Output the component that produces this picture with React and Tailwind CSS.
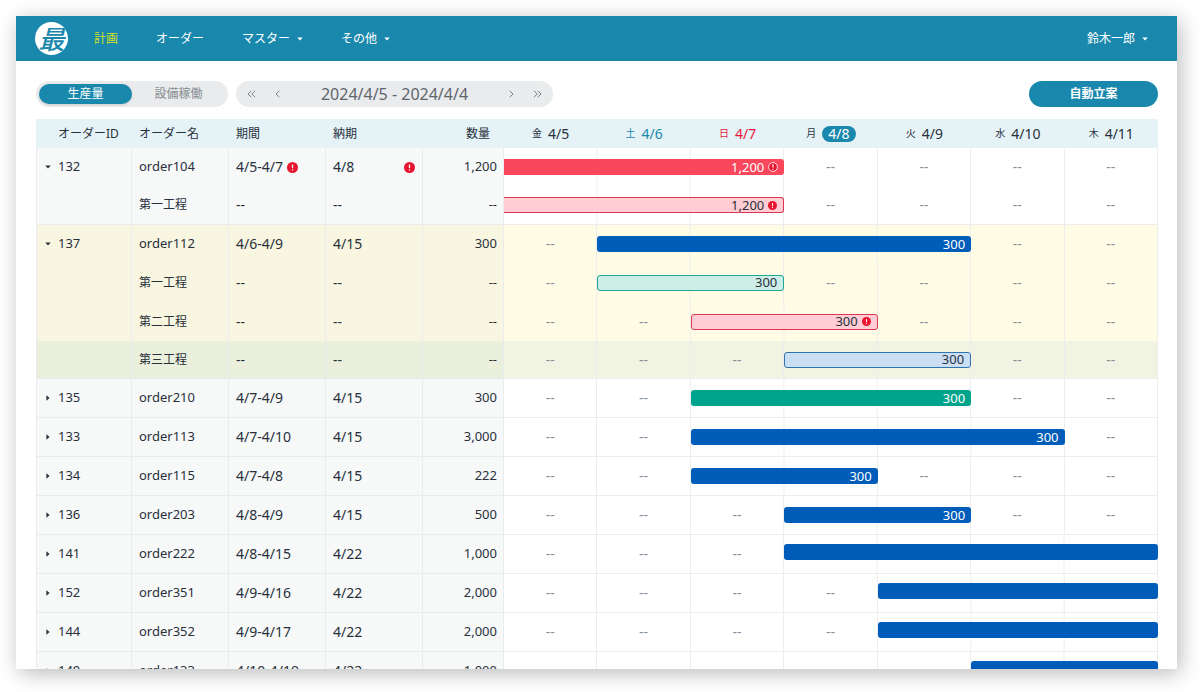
import React from 'react';

const navItems = [
    { label: '計画', active: true },
    { label: 'オーダー' },
    { label: 'マスター', menu: true },
    { label: 'その他', menu: true },
];

const days = [
    { week: '金', date: '4/5' },
    { week: '土', date: '4/6', color: 'text-[#1a88ac]' },
    { week: '日', date: '4/7', color: 'text-[#e6193c]' },
    { week: '月', date: '4/8', today: true },
    { week: '火', date: '4/9' },
    { week: '水', date: '4/10' },
    { week: '木', date: '4/11' },
];

const barStyles = {
    red: 'bg-[#fa475c] text-white',
    pink: 'bg-[#ffcdd3] border border-[#dc3655] text-[#28303c]',
    blue: 'bg-[#005cb9] text-white',
    green: 'bg-[#00a38b] text-white',
    lightGreen: 'bg-[#cdede7] border border-[#20a592] text-[#28303c]',
    lightBlue: 'bg-[#cbdff4] border border-[#2f74b5] text-[#28303c]',
};

// bar.start is the day index, bar.span the number of days
const orders = [
    {
        id: '132', name: 'order104', period: '4/5-4/7', due: '4/8', qty: '1,200', late: true, open: true,
        bar: { start: 0, span: 3, style: 'red', label: '1,200', alert: true, continued: true },
        steps: [
            { name: '第一工程', bar: { start: 0, span: 3, style: 'pink', label: '1,200', alert: true, continued: true } },
        ],
    },
    {
        id: '137', name: 'order112', period: '4/6-4/9', due: '4/15', qty: '300', open: true, tone: 'selected',
        bar: { start: 1, span: 4, style: 'blue', label: '300' },
        steps: [
            { name: '第一工程', bar: { start: 1, span: 2, style: 'lightGreen', label: '300' } },
            { name: '第二工程', bar: { start: 2, span: 2, style: 'pink', label: '300', alert: true } },
            { name: '第三工程', tone: 'hovered', bar: { start: 3, span: 2, style: 'lightBlue', label: '300' } },
        ],
    },
    { id: '135', name: 'order210', period: '4/7-4/9', due: '4/15', qty: '300', bar: { start: 2, span: 3, style: 'green', label: '300' } },
    { id: '133', name: 'order113', period: '4/7-4/10', due: '4/15', qty: '3,000', bar: { start: 2, span: 4, style: 'blue', label: '300' } },
    { id: '134', name: 'order115', period: '4/7-4/8', due: '4/15', qty: '222', bar: { start: 2, span: 2, style: 'blue', label: '300' } },
    { id: '136', name: 'order203', period: '4/8-4/9', due: '4/15', qty: '500', bar: { start: 3, span: 2, style: 'blue', label: '300' } },
    { id: '141', name: 'order222', period: '4/8-4/15', due: '4/22', qty: '1,000', bar: { start: 3, span: 4, style: 'blue' } },
    { id: '152', name: 'order351', period: '4/9-4/16', due: '4/22', qty: '2,000', bar: { start: 4, span: 3, style: 'blue' } },
    { id: '144', name: 'order352', period: '4/9-4/17', due: '4/22', qty: '2,000', bar: { start: 4, span: 3, style: 'blue' } },
    { id: '149', name: 'order133', period: '4/10-4/19', due: '4/22', qty: '1,000', bar: { start: 5, span: 2, style: 'blue' } },
];

const tones = {
    normal: { row: 'h-[39px]', info: 'bg-[#f7f8f8]', day: 'bg-white' },
    selected: { row: 'h-[39px]', info: 'bg-[#f8f6e0]', day: 'bg-[#fffce6]' },
    hovered: { row: 'h-[38px]', info: 'bg-[#ebf0dd]', day: 'bg-[#f1f4e2]' },
};

const Caret = () => (
    <svg width="6" height="4" viewBox="0 0 6 4" fill="currentColor"><path d="M.3.4h5.4L3 3.6z" /></svg>
);

const CaretRight = () => (
    <svg width="4" height="6" viewBox="0 0 4 6" fill="currentColor"><path d="M.4.3v5.4L3.6 3z" /></svg>
);

const AlertIcon = ({ size = 11, ring = false }) => (
    <svg width={size} height={size} viewBox="0 0 12 12" className="shrink-0">
        <circle cx="6" cy="6" r={ring ? 5.3 : 6} fill="#e8152f" stroke={ring ? '#fff' : 'none'} />
        <path d="M6 2.8v3.9" stroke="#fff" strokeWidth="1.4" />
        <circle cx="6" cy="8.6" r=".8" fill="#fff" />
    </svg>
);

const Chevrons = ({ double, flip }) => (
    <svg
        width="9" height="8" viewBox="0 0 9 8" fill="none" stroke="currentColor" strokeWidth="1"
        className={flip ? 'rotate-180' : ''}
    >
        {double ? <path d="M4.3.8 1 4l3.3 3.2M8.1.8 4.8 4l3.3 3.2" /> : <path d="M6.3.8 3 4l3.3 3.2" />}
    </svg>
);

const Bar = ({ bar }) => (
    <div className={bar.label ? '' : 'pb-1'}>
        <div
            className={`flex h-4 items-center justify-end gap-1 pr-1.5 text-[13px] leading-none ${barStyles[bar.style]} ${bar.continued ? 'rounded-r-[3px] border-l-0' : 'rounded-[3px]'}`}
        >
            {bar.label && <span>{bar.label}</span>}
            {bar.alert && <AlertIcon size={bar.style === 'red' ? 10 : 9} ring={bar.style === 'red'} />}
        </div>
    </div>
);

const Row = ({ item, isLast }) => {
    const tone = tones[item.tone || 'normal'];
    const { start, span } = item.bar;
    const bottom = isLast ? 'border-b' : '';
    const info = `border-r border-[#e9ebec] py-0 pl-[7px] ${bottom} ${tone.info}`;
    const day = `border-[#ededee] p-0 ${bottom} ${tone.day}`;
    const emptyDay = (i) => (
        <td key={i} className={`border-r text-center text-sm text-[#8b9096] ${day}`}>--</td>
    );

    return (
        <tr className={item.open ? 'h-[38px]' : tone.row}>
            <td className={`border-l text-[13px] ${info}`}>
                {item.id && (
                    <div className="flex items-center gap-1.5">
                        <button type="button" aria-label={`${item.id}の工程`} aria-expanded={!!item.open} className="flex w-2 justify-center">
                            {item.open ? <Caret /> : <CaretRight />}
                        </button>
                        <span>{item.id}</span>
                    </div>
                )}
            </td>
            <td className={`${item.id ? 'text-[13px]' : 'text-xs'} ${info}`}>{item.name}</td>
            <td className={`text-sm ${info}`}>
                <div className="flex items-center gap-1">
                    <span>{item.period || '--'}</span>
                    {item.late && <AlertIcon />}
                </div>
            </td>
            <td className={`pr-[7px] text-sm ${info}`}>
                <div className="flex items-center justify-between">
                    <span>{item.due || '--'}</span>
                    {item.late && <AlertIcon />}
                </div>
            </td>
            <td className={`pr-1.5 text-right text-[13px] ${info}`}>{item.qty || '--'}</td>
            {days.slice(0, start).map((d, i) => emptyDay(i))}
            {/* the day lines run on behind the bar */}
            <td
                colSpan={span}
                className={`bg-[linear-gradient(to_right,transparent_calc(100%-1px),#ededee_calc(100%-1px))] ${day}`}
                style={{ backgroundSize: `${100 / span}% 100%` }}
            >
                <Bar bar={item.bar} />
            </td>
            {days.slice(start + span).map((d, i) => emptyDay(start + span + i))}
        </tr>
    );
};

const App = () => {
    return (
        <div className="h-screen bg-white pt-4 pr-[23px] pb-[23px] pl-4 font-['Noto_Sans','Noto_Sans_CJK_JP',sans-serif] text-[#28303c]">
            <div className="flex h-full flex-col overflow-hidden bg-white shadow-[3px_4px_20px_rgba(0,0,0,0.28)]">
                {/* HEADER */}
                <header className="flex h-[45px] shrink-0 items-center bg-[#1a88ac] pr-[29px] pl-[19px] text-xs text-white">
                    <a href="#" aria-label="ホーム" className="mr-[26px] flex size-[33px] items-center justify-center overflow-hidden rounded-full bg-white text-[26px] leading-none font-medium text-[#1a88ac] italic">
                        最
                    </a>
                    <nav className="flex items-center gap-[38px]">
                        {navItems.map((item) =>
                            item.menu ? (
                                <button key={item.label} type="button" className="flex items-center gap-[7px]">
                                    {item.label}
                                    <Caret />
                                </button>
                            ) : (
                                <a key={item.label} href="#" className={item.active ? 'text-[#d8e021]' : ''}>{item.label}</a>
                            )
                        )}
                    </nav>
                    <button type="button" className="ml-auto flex items-center gap-[7px]">
                        鈴木一郎
                        <Caret />
                    </button>
                </header>

                <main className="pt-5 pr-[19px] pl-5">
                    {/* TOOLBAR */}
                    <div className="flex items-center gap-2 text-xs">
                        <div className="flex h-[26px] items-center rounded-full bg-[#e9ebec] px-[3px]">
                            <button type="button" aria-pressed="true" className="h-5 w-[93px] rounded-full bg-[#1a88ac] text-white shadow-sm">生産量</button>
                            <button type="button" aria-pressed="false" className="h-5 w-[93px] text-[#868c92]">設備稼働</button>
                        </div>
                        <div className="flex h-[26px] w-[317px] items-center justify-between rounded-full bg-[#e9ebec] px-[11px] text-[#7c8288]">
                            <div className="flex gap-[17px]">
                                <button type="button" aria-label="前の週"><Chevrons double /></button>
                                <button type="button" aria-label="前の日"><Chevrons /></button>
                            </div>
                            <span className="text-base text-[#5f656c]">2024/4/5 - 2024/4/4</span>
                            <div className="flex gap-[17px]">
                                <button type="button" aria-label="次の日"><Chevrons flip /></button>
                                <button type="button" aria-label="次の週"><Chevrons double flip /></button>
                            </div>
                        </div>
                        <button type="button" className="ml-auto h-[26px] w-[129px] rounded-full bg-[#1a88ac] font-bold text-white">自動立案</button>
                    </div>

                    {/* SCHEDULE */}
                    <table className="mt-3 w-full table-fixed border-separate border-spacing-0">
                        <colgroup>
                            <col className="w-[96px]" />
                            <col className="w-[97px]" />
                            <col className="w-[97px]" />
                            <col className="w-[97px]" />
                            <col className="w-[81px]" />
                            {days.map((d) => <col key={d.date} />)}
                        </colgroup>
                        <thead>
                            <tr className="h-[29px] bg-[#e5f3f7] text-left text-xs">
                                <th className="py-0 pr-0 pl-[22px] font-normal">オーダーID</th>
                                <th className="px-[7px] py-0 font-normal">オーダー名</th>
                                <th className="px-[7px] py-0 font-normal">期間</th>
                                <th className="px-[7px] py-0 font-normal">納期</th>
                                <th className="py-0 pr-[14px] text-right font-normal">数量</th>
                                {days.map((d) => (
                                    <th key={d.date} className={`p-0 font-normal ${d.color || ''}`}>
                                        <div className="flex items-center justify-center gap-1.5">
                                            <span className="text-[10px]">{d.week}</span>
                                            <span className={`text-sm leading-4 ${d.today ? 'rounded-full bg-[#1a88ac] px-1.5 text-white' : ''}`}>{d.date}</span>
                                        </div>
                                    </th>
                                ))}
                            </tr>
                        </thead>
                        <tbody>
                            {orders.map((order) => {
                                const steps = order.steps || [];
                                return (
                                    <React.Fragment key={order.id}>
                                        <Row item={order} isLast={steps.length === 0} />
                                        {steps.map((step, i) => (
                                            <Row
                                                key={step.name}
                                                item={{ tone: order.tone, ...step }}
                                                isLast={i === steps.length - 1}
                                            />
                                        ))}
                                    </React.Fragment>
                                );
                            })}
                        </tbody>
                    </table>
                </main>
            </div>
        </div>
    );
};

export default App;
